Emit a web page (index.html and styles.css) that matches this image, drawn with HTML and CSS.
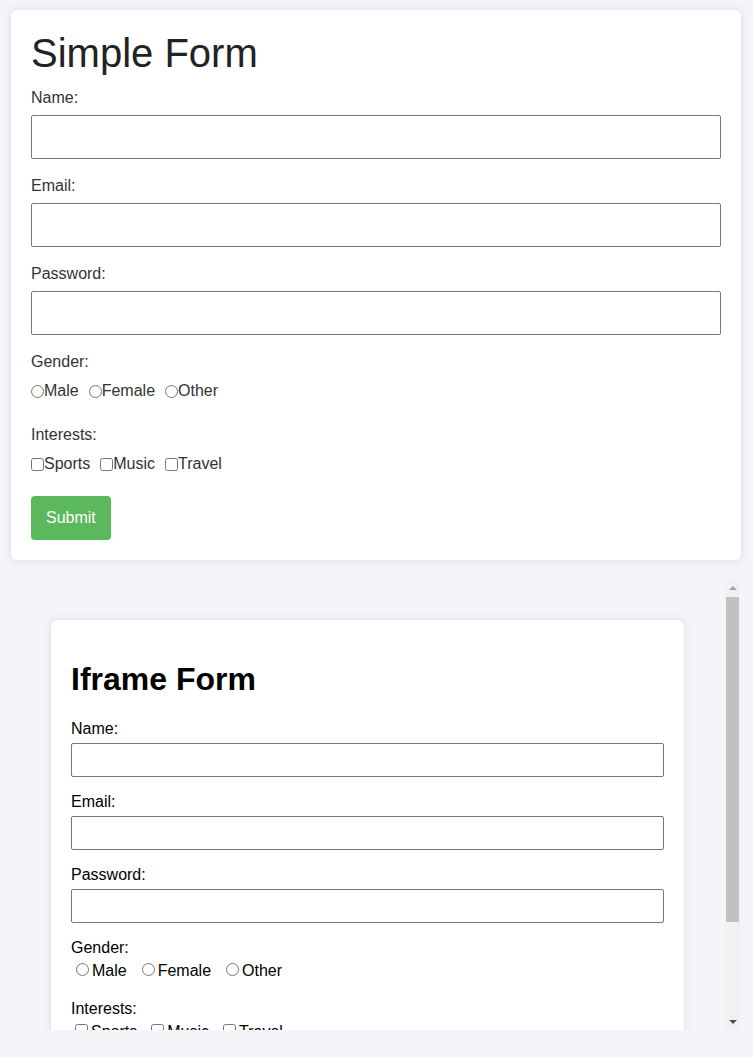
FILE: index.html
```html
<!DOCTYPE html>
<html lang="en">
<head>
<meta charset="utf-8">
<title>Simple Form</title>
<link rel="stylesheet" href="styles.css">
</head>
<body>
<div class="page">
  <div class="card main">
    <h1 class="title">Simple Form</h1>
    <form class="form">
      <div class="group">
        <label class="field-label" for="name">Name:</label>
        <input class="text" id="name" type="text">
      </div>
      <div class="group">
        <label class="field-label" for="email">Email:</label>
        <input class="text" id="email" type="email">
      </div>
      <div class="group">
        <label class="field-label" for="password">Password:</label>
        <input class="text" id="password" type="password">
      </div>
      <div class="group choice">
        <span class="field-label">Gender:</span>
        <div class="options"><label class="opt"><input type="radio" name="gender">Male</label><label class="opt"><input type="radio" name="gender">Female</label><label class="opt"><input type="radio" name="gender">Other</label></div>
      </div>
      <div class="group choice last">
        <span class="field-label">Interests:</span>
        <div class="options"><label class="opt"><input type="checkbox">Sports</label><label class="opt"><input type="checkbox">Music</label><label class="opt"><input type="checkbox">Travel</label></div>
      </div>
      <button class="submit" type="button">Submit</button>
    </form>
  </div>

  <div class="frame">
    <div class="frame-view">
      <div class="card inner">
        <h1 class="ititle">Iframe Form</h1>
        <form class="iform">
          <label class="ilabel" for="iname">Name:</label>
          <input class="itext" id="iname" type="text">
          <label class="ilabel" for="iemail">Email:</label>
          <input class="itext" id="iemail" type="email">
          <label class="ilabel" for="ipass">Password:</label>
          <input class="itext" id="ipass" type="password">
          <label class="ilabel ichoice">Gender:</label>
          <div class="ioptions"><label class="iopt"><input type="radio" name="igender">Male</label><label class="iopt"><input type="radio" name="igender">Female</label><label class="iopt"><input type="radio" name="igender">Other</label></div>
          <label class="ilabel ichoice">Interests:</label>
          <div class="ioptions"><label class="iopt"><input type="checkbox">Sports</label><label class="iopt"><input type="checkbox">Music</label><label class="iopt"><input type="checkbox">Travel</label></div>
          <button class="isubmit" type="button">Submit</button>
        </form>
      </div>
    </div>
    <div class="scrollbar" aria-hidden="true">
      <div class="sb-btn"><span class="arrow-up"></span></div>
      <div class="sb-track"><div class="sb-thumb"></div></div>
      <div class="sb-btn"><span class="arrow-down"></span></div>
    </div>
  </div>
</div>
</body>
</html>
```

FILE: styles.css
```css
html, body {
  margin: 0;
  padding: 0;
}
body {
  background: #f4f4f9;
  font-family: "Liberation Sans", Arial, sans-serif;
  font-size: 16px;
}
.page {
  padding: 10px 0 0 11px;
  width: 730px;
}
.card {
  background: #fff;
  border-radius: 6px;
  box-shadow: 0 0 10px rgba(0, 0, 0, 0.1);
  box-sizing: border-box;
}
.main {
  width: 730px;
  padding: 20px;
  color: #333;
}
.title {
  font-size: 40px;
  font-weight: normal;
  line-height: 46px;
  margin: 0 0 12px;
  color: #222;
}
.group {
  margin-bottom: 17px;
}
.field-label {
  display: block;
  line-height: 18px;
  padding-top: 1px;
  margin-bottom: 8px;
}
.text {
  display: block;
  box-sizing: border-box;
  width: 100%;
  height: 44px;
  margin: 0;
  padding: 0 12px;
  border: 1px solid #767676;
  border-radius: 2px;
  font-family: inherit;
  font-size: 16px;
  background: #fff;
}
.choice {
  margin-bottom: 25px;
}
.choice.last {
  margin-bottom: 23px;
}
.choice .field-label {
  margin-bottom: 11px;
}
.options {
  line-height: 18px;
  height: 18px;
}
.opt {
  margin-right: 10px;
}
.opt input {
  margin: 0;
  width: 13px;
  height: 13px;
  vertical-align: -2px;
}
.submit {
  display: block;
  height: 44px;
  padding: 0 15px;
  border: none;
  border-radius: 4px;
  background: #5cb85c;
  color: #fff;
  font-family: inherit;
  font-size: 16px;
}

/* embedded frame */
.frame {
  margin-top: 20px;
  width: 729px;
  height: 450px;
  display: flex;
}
.frame-view {
  flex: 1;
  overflow: hidden;
}
.scrollbar {
  width: 15px;
  background: #f1f1f1;
  display: flex;
  flex-direction: column;
}
.sb-btn {
  height: 16px;
  display: flex;
  align-items: center;
  justify-content: center;
}
.arrow-up {
  width: 0;
  height: 0;
  border-left: 4px solid transparent;
  border-right: 4px solid transparent;
  border-bottom: 4px solid #a3a3a3;
}
.arrow-down {
  width: 0;
  height: 0;
  border-left: 4px solid transparent;
  border-right: 4px solid transparent;
  border-top: 4px solid #505050;
}
.sb-track {
  flex: 1;
  padding: 1px 1px 0;
}
.sb-thumb {
  height: 325px;
  background: #c1c1c1;
}
.inner {
  width: 633px;
  margin: 40px 0 40px 40px;
  padding: 20px;
  border-radius: 6px;
  color: #000;
}
.ititle {
  font-size: 32px;
  font-weight: bold;
  margin: 21px 0 22px;
}
.ilabel {
  display: block;
  margin-bottom: 5px;
}
.ilabel.ichoice {
  margin-bottom: 3px;
}
.itext {
  display: block;
  box-sizing: border-box;
  width: 100%;
  height: 34px;
  margin: 0 0 16px;
  padding: 0 8px;
  border: 1px solid #767676;
  border-radius: 2px;
  font-family: inherit;
  font-size: 16px;
}
.ioptions {
  margin-bottom: 20px;
}
.iopt {
  margin-right: 10px;
}
.isubmit {
  padding: 10px 15px;
  border: none;
  border-radius: 4px;
  background: #5cb85c;
  color: #fff;
  font-family: inherit;
  font-size: 16px;
}
```
